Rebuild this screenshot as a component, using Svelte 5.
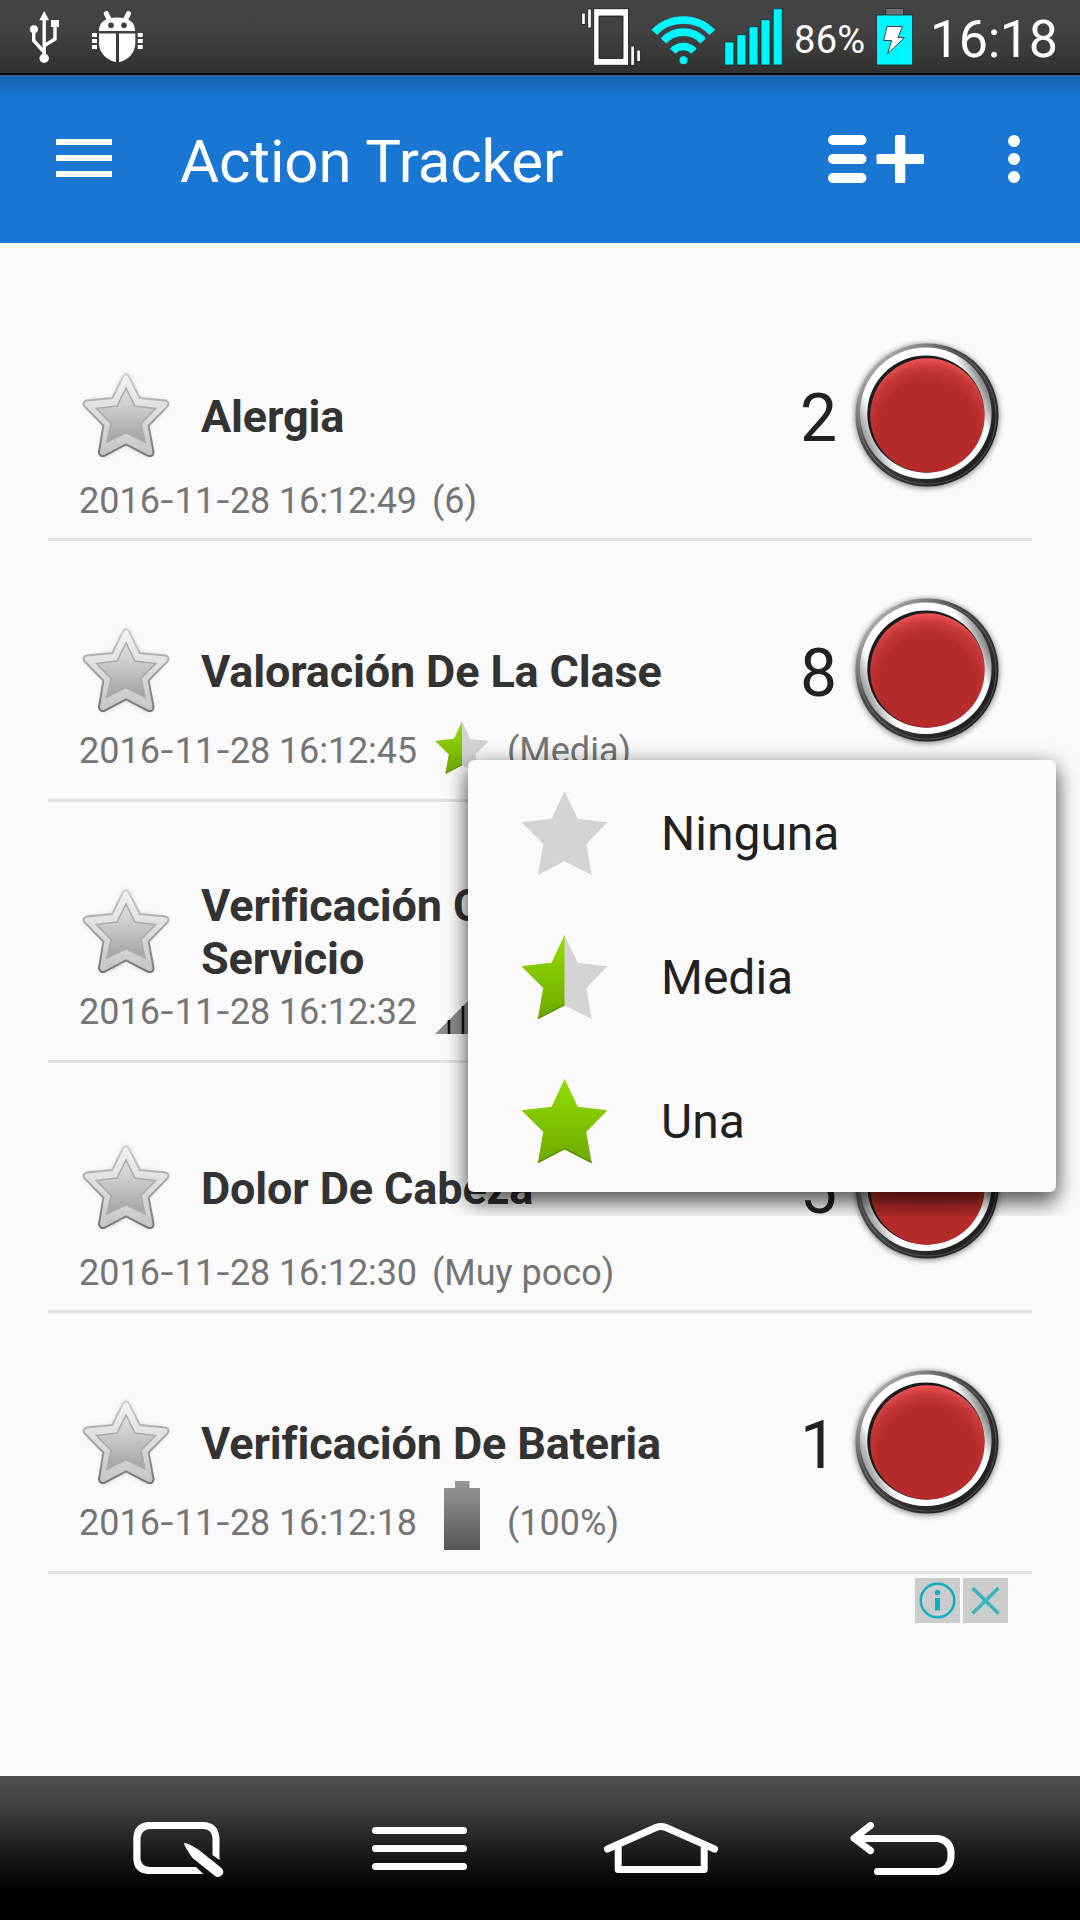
<script>
  const rows = [
    { name: 'Alergia', date: '2016-11-28', time: '16:12:49', value: '(6)', count: '2' },
    { name: 'Valoración De La Clase', date: '2016-11-28', time: '16:12:45', value: '(Media)', count: '8', icon: 'half' },
    { name: 'Verificación Calidad De\nServicio', date: '2016-11-28', time: '16:12:32', value: '', count: '', icon: 'signal' },
    { name: 'Dolor De Cabeza', date: '2016-11-28', time: '16:12:30', value: '(Muy poco)', count: '5' },
    { name: 'Verificación De Bateria', date: '2016-11-28', time: '16:12:18', value: '(100%)', count: '1', icon: 'battery' },
  ];
  const options = [
    { label: 'Ninguna', kind: 'none' },
    { label: 'Media', kind: 'half' },
    { label: 'Una', kind: 'full' },
  ];
  const starPoints = '44,1 57.5,29 87.5,32.5 66,54.5 71.5,86 44,72 17,86 22.5,54.5 0.5,32.5 31,29';
  const halfPoints = '44,1 44,72 17,86 22.5,54.5 0.5,32.5 31,29';
</script>

{#snippet ratingStar(kind)}
  <svg class="rating" viewBox="0 0 88 88">
    <polygon points={starPoints} fill={kind === 'full' ? 'url(#green)' : '#d3d3d3'} />
    {#if kind === 'half'}
      <polygon points={halfPoints} fill="url(#green)" />
    {/if}
    {#if kind !== 'none'}
      <path d={kind === 'half' ? 'M44 71.500 17 85.500' : 'M71.500 85.500 44 71.500 17 85.500'} fill="none" stroke="#5c9404" stroke-width="1.500" />
    {/if}
  </svg>
{/snippet}

<svg class="defs" width="0" height="0">
  <defs>
    <linearGradient id="green" x1="0" y1="0" x2="0" y2="1">
      <stop offset="0" stop-color="#93de00" />
      <stop offset="1" stop-color="#6ea800" />
    </linearGradient>
    <linearGradient id="favOuter" x1="0" y1="0" x2="0" y2="1">
      <stop offset="0" stop-color="#f4f4f4" />
      <stop offset="1" stop-color="#c4c4c4" />
    </linearGradient>
    <linearGradient id="favEdge" x1="0" y1="0" x2="0" y2="1">
      <stop offset="0" stop-color="#cfcfcf" />
      <stop offset="1" stop-color="#747474" />
    </linearGradient>
    <linearGradient id="favInner" x1="0" y1="0" x2="0" y2="1">
      <stop offset="0" stop-color="#e2e2e2" />
      <stop offset="1" stop-color="#a2a2a2" />
    </linearGradient>
    <linearGradient id="rim" x1="0.150" y1="0.150" x2="0.800" y2="0.800">
      <stop offset="0" stop-color="#a8a8a8" />
      <stop offset="0.350" stop-color="#4a4a4a" />
      <stop offset="1" stop-color="#222" />
    </linearGradient>
    <linearGradient id="chrome" x1="0" y1="0.720" x2="1" y2="0.280">
      <stop offset="0" stop-color="#777" />
      <stop offset="0.160" stop-color="#fff" />
      <stop offset="0.840" stop-color="#fff" />
      <stop offset="0.950" stop-color="#888" />
      <stop offset="1" stop-color="#aaa" />
    </linearGradient>
    <radialGradient id="red" cx="0.500" cy="0.620" r="0.630">
      <stop offset="0" stop-color="#b32828" />
      <stop offset="0.680" stop-color="#b62b2b" />
      <stop offset="0.860" stop-color="#c83a3c" />
      <stop offset="1" stop-color="#f45558" />
    </radialGradient>
    <linearGradient id="cell" x1="0" y1="0" x2="0" y2="1">
      <stop offset="0" stop-color="#989898" />
      <stop offset="1" stop-color="#565656" />
    </linearGradient>
    <filter id="soft" x="-20%" y="-20%" width="140%" height="140%"><feGaussianBlur stdDeviation="3" /></filter>
    <filter id="fine"><feGaussianBlur stdDeviation="0.700" /></filter>
  </defs>
</svg>

<div class="screen">
  <div class="status">
    <svg class="usb" viewBox="28 10 34 56" width="34" height="56" fill="none" stroke="#fff" stroke-width="3.400">
      <path d="M44.200 20V60M33.700 32v9.500L44 53M55 26v14L44.500 46.500" />
      <path d="M44.200 12l4.900 9.300h-9.800z" fill="#fff" stroke="none" />
      <circle cx="33.900" cy="30.200" r="4" fill="#fff" stroke="none" />
      <rect x="51" y="21" width="8" height="7" fill="#fff" stroke="none" />
      <circle cx="44.200" cy="59.300" r="4.700" fill="#fff" stroke="none" />
    </svg>
    <svg class="bug" viewBox="90 10 56 56" width="56" height="56">
      <g fill="#fff">
        <path d="M99 32c0-9 6-13.500 18-13.500S135 23 135 32z" />
        <path d="M99 34.500h17V63c-9-1.500-17-9-17-19zM119 34.500h16.300V44c0 10-7.500 17.500-16.300 19z" />
        <path d="M92 34h5v4h-5zM92 40h5v4h-5zM92 46h5v4h-5zM137.700 34h5v4h-5zM137.700 40h5v4h-5zM137.700 46h5v4h-5z" />
      </g>
      <path d="M106.300 14.600l3 6M128.500 14.600l-3 6" stroke="#fff" stroke-width="5" stroke-linecap="round" />
      <circle cx="111" cy="26.300" r="2.800" fill="#3e3e3e" /><circle cx="124" cy="26.300" r="2.800" fill="#3e3e3e" />
    </svg>
    <svg class="vibrate" viewBox="580 6 62 60" width="62" height="60">
      <path d="M593.700 7.700h34.800v56.600h-34.800zM599 15v42.500h24V15z" fill="#fff" stroke="#111" stroke-width="0.800" fill-rule="evenodd" />
      <path d="M581.700 12h3.600v11.500h-3.600zM587.700 8h3.600v19h-3.600zM630.800 45h3.600v19.300h-3.600zM636.800 49h3.600v11.500h-3.600z" fill="#fff" stroke="#111" stroke-width="0.800" />
    </svg>
    <svg class="wifi" viewBox="650 14 68 52" width="68" height="52" fill="none" stroke="#00f6ff" stroke-width="7.600">
      <path d="M654.300 32.300a40.200 40.200 0 0 1 58 0M663.500 40.800a27 27 0 0 1 39.600 0M672.700 51.200a14.400 14.400 0 0 1 21.200 0" />
      <circle cx="683.500" cy="60.200" r="4" fill="#00f6ff" stroke="none" />
    </svg>
    <svg class="bars" viewBox="724 8 60 58" width="60" height="58" fill="#00f6ff" stroke="#10292b" stroke-width="0.800">
      <path d="M724.800 42h9v23h-9zM736.900 34.700h9V65h-9zM749 26.700h9V65h-9zM761 19.700h9V65h-9zM773.200 8.700h9V65h-9z" />
    </svg>
    <span class="percent">86%</span>
    <svg class="charge" viewBox="875 7 40 59" width="40" height="59">
      <path d="M885.700 8.500h18V16h-18z" fill="#707070" stroke="#222" stroke-width="0.800" />
      <path d="M876.500 15h36v50h-36z" fill="#00f6ff" stroke="#10292b" stroke-width="0.800" />
      <path d="M887 26.500h15.500l-4.500 11h6.500L887.500 54l4.200-13.500h-8z" fill="#fff" stroke="#333" stroke-width="0.900" />
    </svg>
    <span class="clock">16:18</span>
  </div>

  <header class="appbar">
    <svg class="burger" viewBox="56 139 56 38" width="56" height="38" fill="#fff">
      <path d="M56 139h56v6H56zM56 155h56v6H56zM56 171h56v6H56z" />
    </svg>
    <h1>Action Tracker</h1>
    <svg class="add" viewBox="828 135 96 48" width="96" height="48" fill="#fff">
      <rect x="828" y="135" width="38.500" height="10" rx="5" />
      <rect x="828" y="154" width="38.500" height="10" rx="5" />
      <rect x="828" y="173" width="38.500" height="10" rx="5" />
      <rect x="876.500" y="154" width="47.500" height="10" rx="1.500" />
      <rect x="895" y="135" width="10.300" height="48" rx="1.500" />
    </svg>
    <svg class="more" viewBox="0 0 12 48" width="12" height="48" fill="#fff">
      <circle cx="6" cy="6" r="6" /><circle cx="6" cy="24" r="6" /><circle cx="6" cy="42" r="6" />
    </svg>
  </header>

  <main>
    {#each rows as row}
      <section class="row" class:tall={row.icon}>
        <div class="line">
          <svg class="fav" viewBox="0 0 92 92" width="92" height="92">
            <path d="M42 7q4-7 8 0l10 21 24 3q8 2 2 8l-18 18 5 25q0 9-8 6L46 77 27 88q-8 3-8-6l5-25L5 39q-5-6 3-8l24-3z" fill="#777" opacity="0.350" filter="url(#soft)" transform="translate(2 2) scale(.96)" />
            <path d="M43 6q3-4.500 6 0l11 22 26 2.500q5 1.500 2 6L69 56l5 27q-.500 5-6 3.500L46 75 24.500 86.500q-5 1.500-6-3.500L23 56 4 36.500q-3-4.500 2-6L32 28z" fill="url(#favOuter)" stroke="url(#favEdge)" stroke-width="2" filter="url(#fine)" transform="translate(.700 1.500) scale(.985)" />
            <path d="M46 19l9 18 20.500 2.500L61 54.500l4 18.500-19-9.500L27 73l4-18.500-14.500-15L37 37z" fill="url(#favInner)" stroke="#aaa" stroke-width="1.600" filter="url(#fine)" />
          </svg>
          <h2>{row.name}</h2>
          <span class="count">{row.count}</span>
          <svg class="button" viewBox="-80 -80 160 160" width="160" height="160">
            <circle r="71.500" cy="1" fill="#000" opacity="0.550" filter="url(#soft)" />
            <circle r="71.500" fill="url(#rim)" />
            <circle r="68.500" cx=".500" cy=".500" fill="none" stroke="#999" stroke-opacity="0.350" stroke-width="1.200" />
            <circle r="65.800" cx="-1.200" cy="-1.800" fill="url(#chrome)" filter="url(#fine)" />
            <circle r="58.500" cx="-1.200" cy="-1" fill="#1c1c1c" filter="url(#fine)" />
            <circle r="57.200" cx="0.500" cy="0.500" fill="url(#red)" />
          </svg>
        </div>
        <div class="detail">
          <span class="stamp">
            <span class="date">{#each row.date.split('-') as part, i}{#if i}<span class="dash">-</span>{/if}{part}{/each}</span>
            <span class="time">{row.time}</span>
          </span>
          {#if row.icon}
            <span class="slot">
              {#if row.icon === 'half'}
                {@render ratingStar('half')}
              {:else if row.icon === 'signal'}
                <svg class="signal" viewBox="0 0 54 54" width="54" height="54">
                  <path d="M0 54 54 0V54z" fill="#8b8b8b" />
                  <path d="M14 40v14M28 26v28M41 13v41" stroke="#111" stroke-width="2.600" />
                </svg>
              {:else}
                <svg class="battery" viewBox="0 0 36 69" width="36" height="69">
                  <path d="M11 0h14.500v7H36v62H0V7h11z" fill="url(#cell)" />
                </svg>
              {/if}
            </span>
          {/if}
          <span class="value">{row.value}</span>
        </div>
      </section>
    {/each}

    <div class="ad">
      <svg viewBox="0 0 45 45" width="45" height="45" fill="none" stroke="#0eaec3">
        <circle cx="22.500" cy="22.500" r="16.800" stroke-width="2.500" />
        <path d="M22.500 20v12.500" stroke-width="5" />
        <circle cx="22.500" cy="14.500" r="2.800" fill="#0eaec3" stroke="none" />
      </svg>
      <svg viewBox="0 0 45 45" width="45" height="45" fill="none" stroke="#3ab4c0" stroke-width="3.600">
        <path d="M9.500 10 35.500 35.500M35.500 10 9.500 35.500" />
      </svg>
    </div>
  </main>

  <nav>
    <svg class="memo" viewBox="132 1820 94 60" width="94" height="60" fill="#fff">
      <path d="M203.500 1874H148q-14-1-14.700-15v-21q.700-15 15-16h56q14 1 15.200 16v22l-7-5v-17q-.600-8.500-9-9H150q-8.500.500-9.500 9v21q1 7.500 9.500 8h46z" />
      <path d="M184.200 1843q2-1 13.800 6.300l23.500 18.700q3.500 4 .500 7-3.500 3.500-7 1L192.800 1858.300q-2.500-3-5-7.500-4-6-3.600-7.800z" />
    </svg>
    <svg class="menu" viewBox="372 1827 95 43" width="95" height="43" fill="#fff">
      <rect x="372" y="1827" width="95" height="7" rx="3.500" />
      <rect x="372" y="1845" width="95" height="7" rx="3.500" />
      <rect x="372" y="1863" width="95" height="7" rx="3.500" />
    </svg>
    <svg class="home" viewBox="603 1820 116 56" width="116" height="56" fill="none" stroke="#fff" stroke-width="7" stroke-linecap="round" stroke-linejoin="round">
      <path d="M607.500 1849 656 1827.500q5-2 10 0L714.500 1849M618.200 1847v22.500h86V1847" />
    </svg>
    <svg class="back" viewBox="849 1820 108 58" width="108" height="58" fill="none" stroke="#fff" stroke-width="7" stroke-linecap="round" stroke-linejoin="round">
      <path d="M870.500 1825.500 854 1838.300l16.500 12.300M858 1838.500h80q12 2 13 13v6q-1 12-13 14h-60.500" />
    </svg>
  </nav>

  <div class="popup">
    {#each options as option}
      <div class="option">
        {@render ratingStar(option.kind)}
        <span>{option.label}</span>
      </div>
    {/each}
  </div>
</div>

<style>
  :global(body) { background: #fafafa; }
  .defs { position: absolute; }
  .screen {
    position: relative;
    display: flex;
    flex-direction: column;
    width: 1080px;
    height: 1920px;
    overflow: hidden;
    background: #fafafa;
    font-family: Roboto, sans-serif;
    color: #212121;
  }
  svg { display: block; flex: none; }
  h1, h2 { margin: 0; }

  .status {
    display: flex;
    align-items: center;
    box-sizing: border-box;
    height: 75px;
    padding-left: 28px;
    color: #fff;
    background: linear-gradient(#444 0, #414141 45%, #31322f 100%);
    border-bottom: 2px solid #020611;
  }
  .bug { margin-left: 28px; }
  .vibrate { margin-left: 434px; }
  .wifi { margin: 7px 0 0 8px; }
  .bars { margin-left: 6px; }
  .percent { width: 72px; margin: 7px 0 0 10px; font-size: 38px; letter-spacing: 0.300px; white-space: nowrap; }
  .charge { margin-left: 9px; }
  .clock { margin: 6px 0 0 15px; font-size: 52px; letter-spacing: -0.400px; white-space: nowrap; }

  .appbar {
    display: flex;
    align-items: center;
    height: 168px;
    padding: 0 60px 0 56px;
    background: linear-gradient(#43617d 0, #1767b8 2px, #1976d2 24px);
  }
  .burger { margin-top: -2px; }
  h1 { margin-left: 68px; padding-top: 5px; color: #fff; font-size: 60px; font-weight: 400; line-height: 70px; letter-spacing: -0.100px; }
  .add { margin-left: auto; }
  .more { margin-left: 84px; }

  main { flex: 1; padding: 48px 48px 0; }
  .row {
    box-sizing: border-box;
    height: 250px;
    padding-top: 66px;
    border-bottom: 3px solid #e0e0e0;
  }
  .row.tall { height: 261px; padding-top: 71px; }
  .line { display: flex; align-items: center; height: 116px; padding-left: 32px; }
  h2 {
    width: 552px;
    margin-left: 29px;
    padding-top: 2px;
    color: #333;
    font-size: 45px;
    font-weight: 700;
    line-height: 53px;
    letter-spacing: -0.150px;
    white-space: pre-line;
  }
  .count { width: 44px; margin-left: 47px; padding-top: 7px; font-size: 66px; line-height: 78px; }
  .button { margin: -23px 0 -22px 3px; }
  .detail {
    display: flex;
    align-items: center;
    height: 54px;
    padding-left: 31px;
    color: #757575;
    font-size: 36px;
    white-space: nowrap;
  }
  .tall .detail { height: 44px; }
  .stamp { display: flex; justify-content: space-between; width: 338px; margin-right: 15px; padding-top: 2px; }
  .time { letter-spacing: -0.100px; }
  .dash { display: inline-block; margin: 0 2.400px; transform: scaleX(1.300); }
  .value { padding-top: 2px; }
  .slot { display: flex; justify-content: center; width: 60px; margin: -12px 15px 0 0; }
  .slot .rating { width: 54px; height: 54px; margin-top: 7px; }
  .signal { margin-top: 4px; }
  .battery { margin-top: -1px; }

  .ad { display: flex; gap: 3px; justify-content: flex-end; padding: 4px 24px 0 0; }
  .ad svg { background: #ccc; }

  nav {
    display: flex;
    align-items: flex-start;
    box-sizing: border-box;
    height: 144px;
    padding: 44px 0 0 132px;
    background: linear-gradient(#505050 0, #454545 16%, #333 32%, #171717 56%, #000 80%);
  }
  .memo { margin-top: 0; }
  .menu { margin: 7px 0 0 146px; }
  .home { margin-left: 136px; }
  .back { margin-left: 130px; }

  .popup {
    position: absolute;
    left: 468px;
    top: 760px;
    width: 588px;
    height: 432px;
    border-radius: 6px;
    background: #fafafa;
    box-shadow: 0 4px 22px rgba(0, 0, 0, 0.400), 0 12px 20px rgba(0, 0, 0, 0.450);
    clip-path: inset(-24px);
  }
  .option { display: flex; align-items: center; height: 144px; padding-left: 53px; font-size: 48px; }
  .option .rating { width: 87px; height: 87px; margin-top: 2px; }
  .option span { margin-left: 53px; padding-top: 3px; }
</style>
